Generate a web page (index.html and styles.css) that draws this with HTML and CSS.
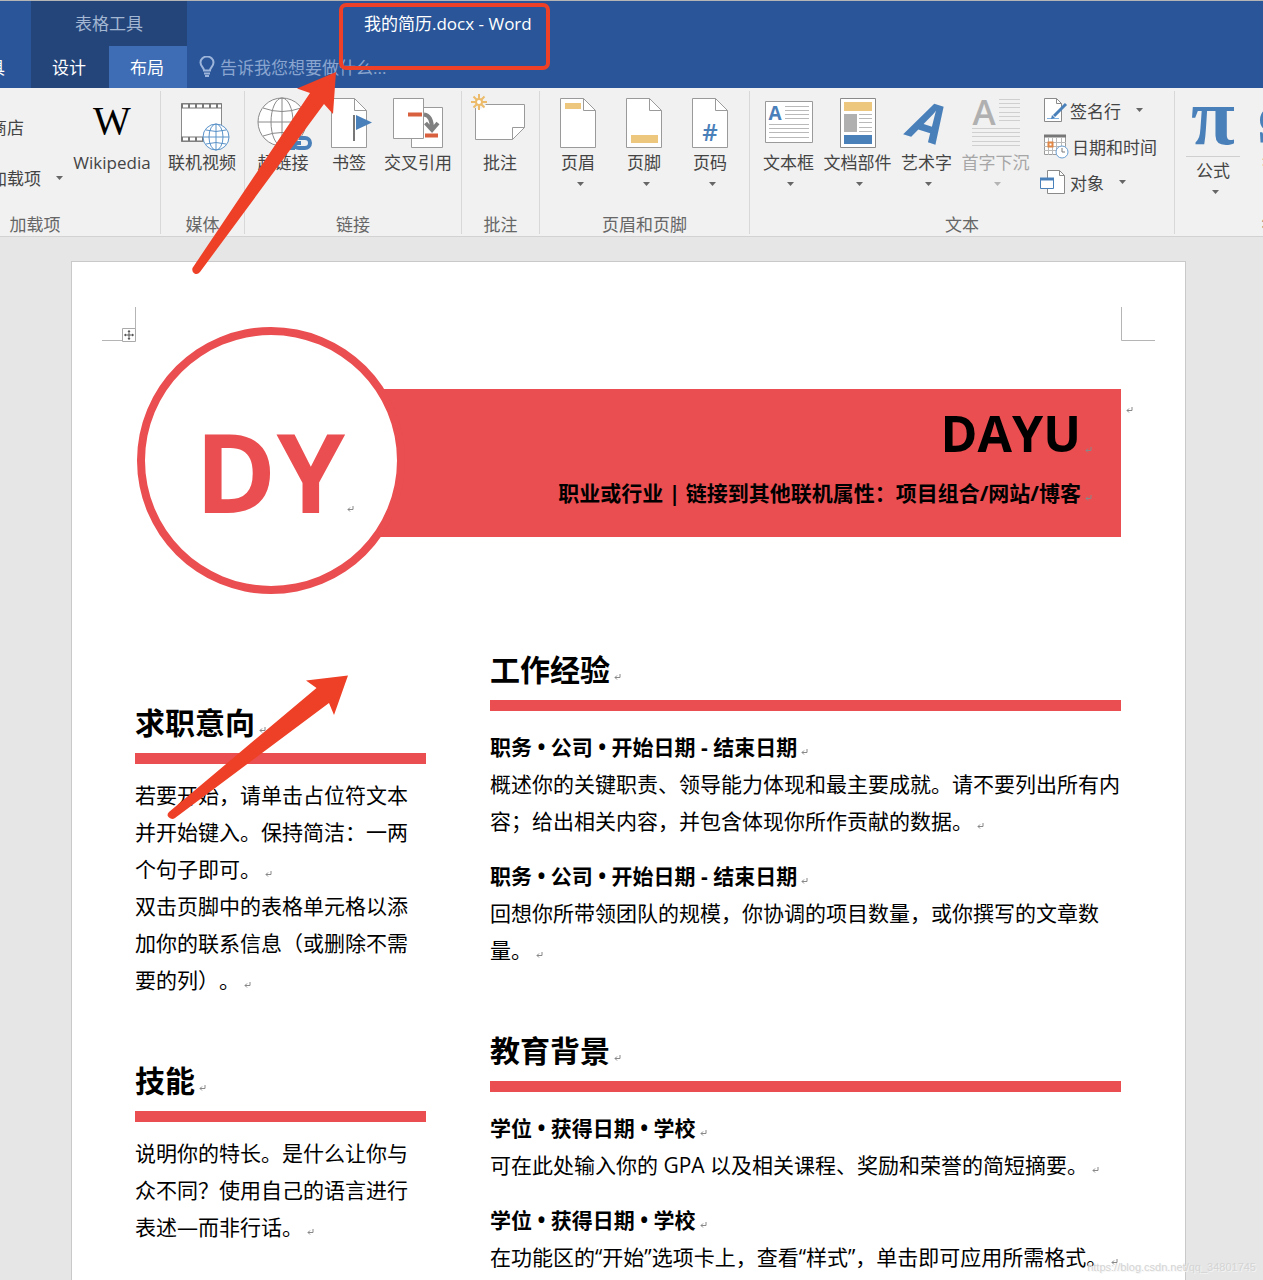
FILE: index.html
```html
<!DOCTYPE html>
<html lang="zh-CN">
<head>
    <meta charset="UTF-8">
    <meta name="viewport" content="width=device-width, initial-scale=1.0">
    <title>我的简历.docx - Word</title>
    <link rel="stylesheet" href="styles.css">
</head>
<body>
    <svg class="defs" aria-hidden="true">
        <symbol id="return" viewBox="0 0 7 7">
            <path d="M6 0v3.500H1M3 1.500l-2 2 2 2" fill="none" stroke="#888" stroke-width="1"/>
        </symbol>
        <symbol id="caret" viewBox="0 0 7 4">
            <path d="M0 0h7L3.500 4z" fill="currentColor"/>
        </symbol>
        <symbol id="page" viewBox="0 0 38 52">
            <path d="M1.500 1.500h23l12 12v37h-35z" fill="#fff" stroke="#9a9a9a"/>
            <path d="M24.500 1.500v12h12" fill="none" stroke="#9a9a9a"/>
        </symbol>
    </svg>

    <header class="topbar">
        <nav class="tabs-left"><button class="tab tab-cut">工具</button></nav>
        <div class="context">
            <div class="context-title">表格工具</div>
            <div class="context-tabs">
                <button class="tab">设计</button>
                <button class="tab active">布局</button>
            </div>
        </div>
        <div class="title-area">
            <div class="doc-title">我的简历.docx - Word</div>
            <div class="tell-me">
                <svg width="16" height="22" viewBox="0 0 16 22" aria-hidden="true">
                    <path d="M5 14.500c0-3-3.500-4-3.500-8a6.500 6 0 0 1 13 0c0 4-3.500 5-3.500 8z" fill="none" stroke="#9db5da" stroke-width="2"/>
                    <path d="M5 17.500h6M6 20h4" stroke="#9db5da" stroke-width="2"/>
                </svg>
                <input type="text" aria-label="告诉我您想要做什么" placeholder="告诉我您想要做什么...">
            </div>
        </div>
    </header>

    <div class="ribbon">
        <section class="group group-addins">
            <div class="tools">
                <div class="addin-list">
                    <button class="small-btn">应用商店</button>
                    <button class="small-btn">我的加载项 <svg class="caret"><use href="#caret"/></svg></button>
                </div>
                <button class="big-btn wide">
                    <svg class="icon" width="50" height="52" viewBox="0 0 50 52"><text class="wiki" x="25" y="37">W</text></svg>
                    <span>Wikipedia</span>
                </button>
            </div>
            <h3>加载项</h3>
        </section>

        <section class="group group-media">
            <div class="tools">
                <button class="big-btn">
                    <svg class="icon" width="54" height="52" viewBox="0 0 54 52">
                        <path d="M6.500 6.500h40v38h-40z" fill="#fff" stroke="#8a8a8a"/>
                        <path d="M6 9h41M6 42h24" stroke="#777" stroke-width="5"/>
                        <path d="M8 9h38M8 42h22" stroke="#fff" stroke-width="3" stroke-dasharray="5 2"/>
                        <circle cx="41" cy="40" r="13" fill="#fff" stroke="#5b93c9"/>
                        <path d="M28 40h26M41 27v26M31 33q10 3 20 0M31 47q10-3 20 0" fill="none" stroke="#5b93c9"/>
                        <ellipse cx="41" cy="40" rx="7" ry="13" fill="none" stroke="#5b93c9"/>
                    </svg>
                    <span>联机视频</span>
                </button>
            </div>
            <h3>媒体</h3>
        </section>

        <section class="group group-links">
            <div class="tools">
                <button class="big-btn">
                    <svg class="icon" width="52" height="52" viewBox="0 0 52 52">
                        <circle cx="25" cy="25" r="24" fill="#fff" stroke="#8a8a8a"/>
                        <path d="M1 25h48M25 1v48M6 11q19 7 38 0M6 39q19-7 38 0" fill="none" stroke="#8a8a8a"/>
                        <ellipse cx="25" cy="25" rx="11" ry="24" fill="none" stroke="#8a8a8a"/>
                        <path d="M34 41h-4a5 5 0 0 0 0 10h8M42 41h6a5 5 0 0 1 0 10h-6a5 5 0 0 1-5-5h7" fill="none" stroke="#4a80ba" stroke-width="4"/>
                    </svg>
                    <span>超链接</span>
                </button>
                <button class="big-btn">
                    <svg class="icon" width="38" height="52" viewBox="0 0 38 52">
                        <use href="#page" width="38" height="52"/>
                        <path d="M24 18v26" stroke="#777" stroke-width="2"/>
                        <path d="M26 18l16 7.500-16 7.500z" fill="#4a80ba"/>
                    </svg>
                    <span>书签</span>
                </button>
                <button class="big-btn wide-72">
                    <svg class="icon" width="50" height="52" viewBox="0 0 50 52">
                        <path d="M18.500 10.500h31v40h-31z" fill="#fff" stroke="#9a9a9a"/>
                        <path d="M.5 1.500h30v40H.5z" fill="#fff" stroke="#9a9a9a"/>
                        <path d="M15 17.500h14M32 38.500h13" stroke="#d9603f" stroke-width="4"/>
                        <path d="M31 17.500q8 1 8 15M32.500 26l6.500 7 6-7" fill="none" stroke="#808080" stroke-width="4"/>
                    </svg>
                    <span>交叉引用</span>
                </button>
            </div>
            <h3>链接</h3>
        </section>

        <section class="group group-comment">
            <div class="tools">
                <button class="big-btn">
                    <svg class="icon" width="60" height="52" viewBox="0 0 60 52">
                        <path d="M5.500 7.500h49v23l-12 12h-37z" fill="#fff" stroke="#9a9a9a"/>
                        <path d="M54.500 30.500h-12v12" fill="none" stroke="#9a9a9a"/>
                        <circle cx="9" cy="5" r="7" fill="#f1f1f1"/>
                        <circle cx="9" cy="5" r="3" fill="#fff" stroke="#ecbc6c" stroke-width="2"/>
                        <path d="M9-3v5M9 8v5M1 5h5M12 5h5M3.500-.5L7 3M11 7l3.500 3.500M14.500-.5L11 3M7 7l-3.500 3.500" stroke="#ecbc6c" stroke-width="2"/>
                    </svg>
                    <span>批注</span>
                </button>
            </div>
            <h3>批注</h3>
        </section>

        <section class="group group-header">
            <div class="tools">
                <button class="big-btn">
                    <svg class="icon" width="38" height="52" viewBox="0 0 38 52">
                        <use href="#page" width="38" height="52"/>
                        <path d="M6 6h16v6H6z" fill="#eec77e"/>
                    </svg>
                    <span>页眉</span>
                    <svg class="caret"><use href="#caret"/></svg>
                </button>
                <button class="big-btn">
                    <svg class="icon" width="38" height="52" viewBox="0 0 38 52">
                        <use href="#page" width="38" height="52"/>
                        <path d="M6 38h27v8H6z" fill="#eec77e"/>
                    </svg>
                    <span>页脚</span>
                    <svg class="caret"><use href="#caret"/></svg>
                </button>
                <button class="big-btn">
                    <svg class="icon" width="38" height="52" viewBox="0 0 38 52">
                        <use href="#page" width="38" height="52"/>
                        <text class="hash" x="19" y="44">#</text>
                    </svg>
                    <span>页码</span>
                    <svg class="caret"><use href="#caret"/></svg>
                </button>
            </div>
            <h3>页眉和页脚</h3>
        </section>

        <section class="group group-text">
            <div class="tools">
                <button class="big-btn">
                    <svg class="icon" width="48" height="52" viewBox="0 0 48 52">
                        <path d="M.5 4.500h47v41H.5z" fill="#fff" stroke="#9a9a9a"/>
                        <path d="M20 9.500h24M20 13.500h24M20 17.500h24M20 21.500h24M4 27.500h40M4 31.500h40M4 35.500h40M4 40.500h40" stroke="#b9b9b9"/>
                        <text class="textbox-a" x="10" y="23">A</text>
                    </svg>
                    <span>文本框</span>
                    <svg class="caret"><use href="#caret"/></svg>
                </button>
                <button class="big-btn">
                    <svg class="icon" width="36" height="52" viewBox="0 0 36 52">
                        <path d="M.5 1.500h35v49H.5z" fill="#fff" stroke="#8a8a8a"/>
                        <path d="M4 5h28v9H4z" fill="#eec77e"/>
                        <path d="M4 17h13v18H4z" fill="#b0b0b0"/>
                        <path d="M4 38h28v9H4z" fill="#4a80ba"/>
                        <path d="M19 17.500h13M19 21.500h13M19 25.500h13M19 30.500h13M19 34.500h13" stroke="#b9b9b9"/>
                    </svg>
                    <span>文档部件</span>
                    <svg class="caret"><use href="#caret"/></svg>
                </button>
                <button class="big-btn">
                    <svg class="icon" width="48" height="52" viewBox="0 0 48 52"><text class="wordart" x="25" y="44" transform="rotate(18 24 26)">A</text></svg>
                    <span>艺术字</span>
                    <svg class="caret"><use href="#caret"/></svg>
                </button>
                <button class="big-btn" disabled>
                    <svg class="icon" width="50" height="52" viewBox="0 0 50 52">
                        <path d="M28 2.500h21M28 6.500h21M28 10.500h21M28 15.500h21M28 19.500h21M28 23.500h21M1 31.500h48M1 35.500h48M1 39.500h48M1 44.500h48M1 48.500h48" stroke="#cfcfcf"/>
                        <text class="dropcap" x="13" y="28">A</text>
                    </svg>
                    <span>首字下沉</span>
                    <svg class="caret"><use href="#caret"/></svg>
                </button>
                <div class="text-list">
                    <button class="small-btn">
                        <svg width="28" height="26" viewBox="0 0 28 26">
                            <path d="M4.500 1.500h12l5 5v18h-17z" fill="#fff" stroke="#8a8a8a"/>
                            <path d="M16.500 1.500v5h5" fill="none" stroke="#8a8a8a"/>
                            <path d="M7 21.500h12" stroke="#7fb0e0"/>
                            <path d="M26 7L14 19" stroke="#4a80ba" stroke-width="3"/>
                            <path d="M11 22l1-4 3 3z" fill="#4a80ba"/>
                        </svg>
                        签名行 <svg class="caret"><use href="#caret"/></svg>
                    </button>
                    <button class="small-btn">
                        <svg width="30" height="26" viewBox="0 0 30 26">
                            <path d="M4.500 2.500h21v19h-21z" fill="#fff" stroke="#9a9a9a"/>
                            <path d="M4 3h22" stroke="#777" stroke-width="3"/>
                            <path d="M4 9.500h22M4 13.500h22M4 17.500h22M8.500 5v17M12.500 5v17M16.500 5v17M21.500 5v17" stroke="#b9b9b9"/>
                            <path d="M8.500 9.500h4v4h-4z" fill="#fff" stroke="#e08745" stroke-width="2"/>
                            <circle cx="22" cy="19" r="6" fill="#fff" stroke="#6a9fd4"/>
                            <path d="M22 15v4h3" fill="none" stroke="#777"/>
                        </svg>
                        日期和时间
                    </button>
                    <button class="small-btn">
                        <svg width="28" height="26" viewBox="0 0 28 26">
                            <path d="M7.500 1.500h12l5 5v18h-17z" fill="#fff" stroke="#8a8a8a"/>
                            <path d="M19.500 1.500v5h5" fill="none" stroke="#8a8a8a"/>
                            <path d="M.5 9.500h13v10H.5z" fill="#fff" stroke="#4a80ba"/>
                            <path d="M0 10h14" stroke="#4a80ba" stroke-width="3"/>
                        </svg>
                        对象 <svg class="caret"><use href="#caret"/></svg>
                    </button>
                </div>
            </div>
            <h3>文本</h3>
        </section>

        <section class="group group-symbols">
            <div class="tools">
                <button class="big-btn split">
                    <svg class="icon" width="54" height="60" viewBox="0 0 54 60">
                        <text class="pi" x="27" y="47">π</text>
                        <path d="M0 59.500h54" stroke="#cfcfcf"/>
                    </svg>
                    <span>公式</span>
                    <svg class="caret"><use href="#caret"/></svg>
                </button>
                <button class="big-btn">
                    <svg class="icon" width="50" height="52" viewBox="0 0 50 52"><text class="omega" x="25" y="45">Ω</text></svg>
                    <span>符号</span>
                </button>
            </div>
            <h3>符号</h3>
        </section>
    </div>

    <main class="workspace">
        <article class="paper">
            <svg class="corner corner-left" width="34" height="35" viewBox="0 0 34 35" aria-hidden="true">
                <path d="M33.500 0v34M0 33.500h34" stroke="#b5b5b5"/>
                <path d="M20.500 21.500h13v13h-13z" fill="#fff" stroke="#aaa"/>
                <path d="M27 23.500v9M22.500 28h9" stroke="#555"/>
                <path d="M25.500 25l1.500-2 1.500 2zM25.500 31l1.500 2 1.500-2zM24 26.500l-2 1.500 2 1.500zM30 26.500l2 1.500-2 1.500z" fill="#555"/>
            </svg>
            <svg class="corner corner-right" width="34" height="34" viewBox="0 0 34 34" aria-hidden="true">
                <path d="M.5 0v33.500H34" fill="none" stroke="#b5b5b5"/>
            </svg>

            <header class="resume-head">
                <div class="banner">
                    <h1>DAYU<svg class="mark"><use href="#return"/></svg></h1>
                    <p>职业或行业 | 链接到其他联机属性：项目组合/网站/博客<svg class="mark"><use href="#return"/></svg></p>
                </div>
                <div class="monogram">DY<svg class="mark"><use href="#return"/></svg></div>
                <svg class="mark row-mark"><use href="#return"/></svg>
            </header>

            <div class="columns">
                <div class="side">
                    <section>
                        <h2>求职意向<svg class="mark"><use href="#return"/></svg></h2>
                        <p>若要开始，请单击占位符文本并开始键入。保持简洁：一两个句子即可。<svg class="mark"><use href="#return"/></svg></p>
                        <p>双击页脚中的表格单元格以添加你的联系信息（或删除不需要的列）。<svg class="mark"><use href="#return"/></svg></p>
                    </section>
                    <section>
                        <h2>技能<svg class="mark"><use href="#return"/></svg></h2>
                        <p>说明你的特长。是什么让你与众不同？使用自己的语言进行表述—而非行话。<svg class="mark"><use href="#return"/></svg></p>
                    </section>
                </div>
                <div class="main">
                    <section>
                        <h2>工作经验<svg class="mark"><use href="#return"/></svg></h2>
                        <h4>职务 • 公司 • 开始日期 - 结束日期<svg class="mark"><use href="#return"/></svg></h4>
                        <p>概述你的关键职责、领导能力体现和最主要成就。请不要列出所有内容；给出相关内容，并包含体现你所作贡献的数据。<svg class="mark"><use href="#return"/></svg></p>
                        <h4>职务 • 公司 • 开始日期 - 结束日期<svg class="mark"><use href="#return"/></svg></h4>
                        <p>回想你所带领团队的规模，你协调的项目数量，或你撰写的文章数量。<svg class="mark"><use href="#return"/></svg></p>
                    </section>
                    <section>
                        <h2>教育背景<svg class="mark"><use href="#return"/></svg></h2>
                        <h4>学位 • 获得日期 • 学校<svg class="mark"><use href="#return"/></svg></h4>
                        <p>可在此处输入你的 GPA 以及相关课程、奖励和荣誉的简短摘要。<svg class="mark"><use href="#return"/></svg></p>
                        <h4>学位 • 获得日期 • 学校<svg class="mark"><use href="#return"/></svg></h4>
                        <p>在功能区的“开始”选项卡上，查看“样式”，单击即可应用所需格式。<svg class="mark"><use href="#return"/></svg></p>
                    </section>
                </div>
            </div>
        </article>
    </main>

    <!-- red annotations -->
    <div class="note-box"></div>
    <svg class="note-arrow arrow-title" width="146" height="204" viewBox="0 0 146 204" aria-hidden="true">
        <path d="M146 2l-39 16.500 13 4.500L2.500 198q-1 4 2 5.500t5.500-1.500L134 34l9 10z" fill="#ee4026"/>
    </svg>
    <svg class="note-arrow arrow-body" width="182" height="146" viewBox="0 0 182 146" aria-hidden="true">
        <path d="M181 1.500l-42 5 10.500 7.500L2 138q-3 3 0 5.500t6 .5L162 29l5 12z" fill="#ee4026"/>
    </svg>
    <div class="watermark">https://blog.csdn.net/qq_34801745</div>
</body>
</html>
```

FILE: styles.css
```css
* {
    box-sizing: border-box;
}
body {
    font-family: "Open Sans", "Noto Sans CJK SC", sans-serif;
    margin: 0;
    min-height: 100vh;
    display: flex;
    flex-direction: column;
    position: relative;
    overflow-x: hidden;
    background-color: #e6e6e6;
    color: #000;
    text-spacing-trim: space-all;
}
h1, h2, h3, h4, p {
    margin: 0;
}
button, input {
    font: inherit;
    color: inherit;
    border: none;
    padding: 0;
    background: none;
}
.defs {
    position: absolute;
    width: 0;
    height: 0;
}

/* title bar */
.topbar {
    display: flex;
    height: 88px;
    border-top: 1px solid #b5b5b5;
    background: #2a5699;
    color: #fff;
    font-size: 17px;
}
.tabs-left {
    display: flex;
    width: 31px;
    align-items: flex-end;
    justify-content: flex-end;
    overflow: hidden;
}
.tab {
    width: 78px;
    height: 42px;
    padding: 0 2px 2px 0;
}
.tab-cut {
    flex: none;
    width: auto;
    padding-right: 26px;
}
.tab.active {
    background: #3e6db5;
}
.context {
    background: #24457a;
}
.context-title {
    height: 45px;
    line-height: 46px;
    text-align: center;
    color: #a3b6d2;
}
.context-tabs {
    display: flex;
}
.title-area {
    flex: 1;
}
.doc-title {
    height: 45px;
    line-height: 45px;
    padding-left: 177px;
}
.tell-me {
    display: flex;
    align-items: center;
    gap: 5px;
    height: 42px;
    padding-left: 12px;
}
.tell-me input {
    width: 240px;
    outline: none;
}
.tell-me input::placeholder {
    color: #8aa5cf;
    opacity: 1;
}

/* ribbon */
.ribbon {
    display: flex;
    height: 149px;
    padding: 3px 0 2px;
    overflow: hidden;
    background: #f1f1f1;
    border-bottom: 1px solid #d2d2d2;
    color: #444;
    font-size: 17px;
}
.group {
    flex: none;
    display: flex;
    flex-direction: column;
    justify-content: space-between;
    border-right: 1px solid #d8d8d8;
}
.group h3 {
    font-size: 17px;
    font-weight: normal;
    line-height: 18px;
    text-align: center;
    color: #666;
}
.tools {
    display: flex;
    padding: 0 5px;
}
.group-addins {
    width: 251px;
    margin-left: -90px;
}
.group-media {
    width: 84px;
}
.group-links {
    width: 217px;
}
.group-comment {
    width: 78px;
}
.group-header {
    width: 210px;
}
.group-text {
    width: 425px;
}
.group-symbols {
    width: 208px;
}
.big-btn {
    width: 66px;
    height: 114px;
    padding-top: 6px;
    display: flex;
    flex-direction: column;
    align-items: center;
    white-space: nowrap;
}
.big-btn .icon {
    flex: none;
    overflow: visible;
    margin-bottom: 4px;
}
.big-btn span {
    line-height: 20px;
}
.big-btn .caret {
    margin: 9px 0 0 4px;
}
.big-btn:disabled {
    color: #a6a6a6;
}
.group-media .big-btn, .wide-72 {
    width: 72px;
}
.group-text .tools {
    padding-left: 4px;
}
.group-text .big-btn {
    width: 69px;
}
.group-addins .wide {
    width: 84px;
}
.caret {
    width: 7px;
    height: 4px;
}
.big-btn .caret, .small-btn .caret {
    opacity: .8;
}
.addin-list {
    width: 155px;
    padding: 10px 0 0 41px;
}
.small-btn {
    display: flex;
    align-items: center;
    gap: 2px;
    height: 36px;
    white-space: nowrap;
}
.small-btn .caret {
    margin-left: 13px;
}
.addin-list .small-btn {
    height: 51px;
}
.text-list {
    margin-left: 10px;
    padding-top: 1px;
}

/* letters inside the ribbon icons */
.icon text {
    text-anchor: middle;
    fill: #4a80ba;
    font-family: "Open Sans", sans-serif;
}
.icon .wiki {
    font-family: "Liberation Serif", serif;
    font-size: 40px;
    fill: #000;
}
.icon .hash {
    font-size: 24px;
    font-weight: 600;
}
.icon .textbox-a {
    font-size: 19px;
    font-weight: bold;
}
.icon .wordart {
    font-size: 54px;
    font-weight: bold;
    font-style: italic;
}
.icon .dropcap {
    font-size: 35px;
    font-weight: 600;
    fill: #b0b0b0;
}
.icon .pi {
    font-family: "Liberation Serif", serif;
    font-size: 80px;
    font-weight: bold;
}
.icon .omega {
    font-family: "Liberation Serif", serif;
    font-size: 54px;
    font-weight: bold;
}

/* document */
.workspace {
    flex: 1;
    display: flex;
    padding: 24px 77px 0 71px;
}
.paper {
    flex: 1;
    position: relative;
    padding: 65px 64px 0 63px;
    background: #fff;
    border: 1px solid #c9c9c9;
    border-bottom: none;
}
.corner {
    position: absolute;
    top: 45px;
}
.corner-left {
    left: 30px;
}
.corner-right {
    right: 30px;
}
.mark {
    position: absolute;
    width: 7px;
    height: 7px;
    margin: 20px 0 0 4px;
}
h1 .mark {
    margin-top: 44px;
}
h2 .mark {
    margin-top: 24px;
}
.resume-head {
    display: grid;
    position: relative;
}
.banner, .monogram {
    grid-area: 1 / 1;
}
.banner {
    height: 148px;
    margin: 62px 0 0 134px;
    padding: 14px 40px 0 0;
    background: #ea4e50;
    text-align: right;
}
.banner h1 {
    font-size: 50px;
    line-height: 60px;
}
.banner p {
    margin-top: 12px;
    font-size: 21px;
    font-weight: bold;
    line-height: 37px;
}
.monogram {
    width: 268px;
    height: 267px;
    margin-left: 2px;
    padding: 18px 2px 0 0;
    display: flex;
    align-items: center;
    justify-content: center;
    background: #fff;
    border: 8px solid #ea4e50;
    border-radius: 50%;
    color: #ea4e50;
    font-size: 110px;
    font-weight: bold;
    line-height: 120px;
}
.monogram .mark {
    margin: 80px 0 0 160px;
}
.row-mark {
    margin: 0;
    right: -12px;
    top: 80px;
}
.columns {
    display: grid;
    grid-template-columns: 291fr 631fr;
    gap: 64px;
    margin-top: 56px;
    font-size: 21px;
    line-height: 37px;
}
.side {
    padding-top: 53px;
}
.columns section + section {
    margin-top: 62px;
}
.columns h2 {
    padding-bottom: 10px;
    margin-bottom: 13px;
    border-bottom: 11px solid #ea4e50;
    font-size: 30px;
    line-height: 40px;
}
.columns h4 {
    margin-top: 18px;
    font-size: 21px;
}

/* red annotations */
.note-box, .note-arrow, .watermark {
    position: absolute;
    pointer-events: none;
}
.note-box {
    left: 339px;
    top: 3px;
    width: 211px;
    height: 67px;
    border: 4px solid #ee4026;
    border-radius: 7px;
}
.arrow-title {
    left: 190px;
    top: 70px;
}
.arrow-body {
    left: 167px;
    top: 674px;
}
.watermark {
    right: 7px;
    bottom: 5px;
    font-family: "Liberation Sans", sans-serif;
    font-size: 11px;
    line-height: 16px;
    color: #d4d4d4;
    text-shadow: 1px 1px 0 #f4f4f4;
}
```
